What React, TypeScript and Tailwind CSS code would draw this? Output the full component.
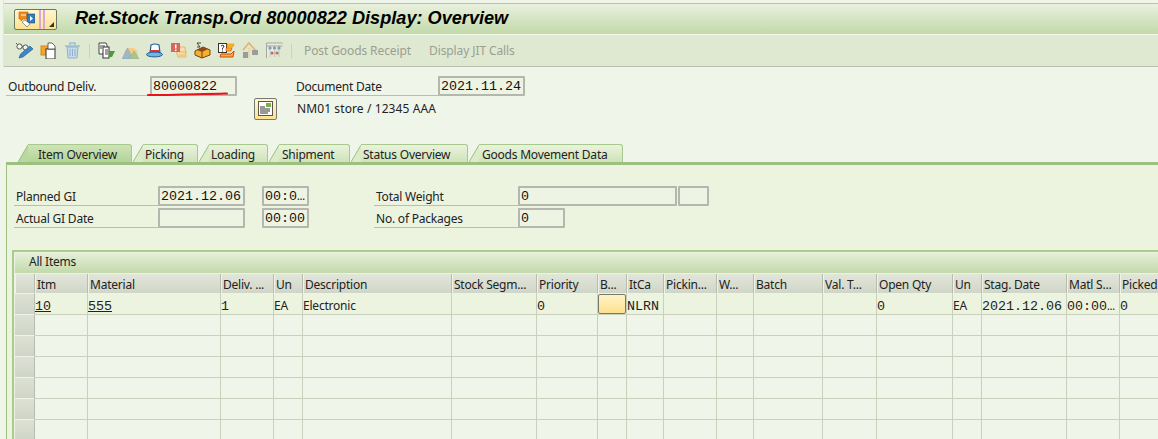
import type { ReactNode } from "react";

const sans = "[font-family:'Noto_Sans','Open_Sans',sans-serif] tracking-[-0.22px]";

const columns = [
  { w: 20, label: "" },
  { w: 53, label: "Itm" },
  { w: 133, label: "Material" },
  { w: 53, label: "Deliv. ..." },
  { w: 29, label: "Un" },
  { w: 149, label: "Description" },
  { w: 85, label: "Stock Segm..." },
  { w: 61, label: "Priority" },
  { w: 29, label: "B..." },
  { w: 37, label: "ItCa" },
  { w: 53, label: "Pickin..." },
  { w: 37, label: "W..." },
  { w: 69, label: "Batch" },
  { w: 54, label: "Val. T..." },
  { w: 76, label: "Open Qty" },
  { w: 29, label: "Un" },
  { w: 85, label: "Stag. Date" },
  { w: 53, label: "Matl S..." },
  { w: 53, label: "Picked" },
];

const tabs = [
  { label: "Item Overview", w: 104, pad: 10, active: true },
  { label: "Picking", w: 55, pad: 2 },
  { label: "Loading", w: 59, pad: 2 },
  { label: "Shipment", w: 71, pad: 3 },
  { label: "Status Overview", w: 107, pad: 2 },
  { label: "Goods Movement Data", w: 144, pad: 3 },
];

function Box({ w, children }: { w: number; children?: ReactNode }) {
  return (
    <div
      style={{ width: w }}
      className="h-[20px] shrink-0 border-2 border-[#b4b7ae] rounded-[1px] bg-[#eef4e4] pl-[1px] text-[#111] leading-[17px] tracking-normal whitespace-nowrap overflow-hidden [font-family:'Liberation_Mono',monospace] text-[13.33px]"
    >
      {children}
    </div>
  );
}

function Label({ w, children }: { w: number; children: ReactNode }) {
  return (
    <div
      style={{ width: w }}
      className="h-[20px] shrink-0 border-b border-[#b9bdb2] pl-[2px] text-[12px] leading-[21px] text-[#222] whitespace-nowrap"
    >
      {children}
    </div>
  );
}

function Tab({ label, w, pad, active }: { label: string; w: number; pad: number; active?: boolean }) {
  const fill = active ? "#b9d89f" : "#dcebc8";
  return (
    <div className="flex h-[18px] shrink-0 items-stretch">
      <svg width="10" height="18" viewBox="0 0 10 18" className="shrink-0">
        <path d="M0 18 L10 1 L10 18 Z" fill={fill} />
        <path d="M0 18 L10 1" stroke="#9cc07f" fill="none" />
      </svg>
      <div
        style={{ width: w, paddingLeft: pad }}
        className={`border-t border-r border-[#a8c98d] rounded-tr-[3px] text-[12px] leading-[19px] text-[#222] whitespace-nowrap ${
          active ? "bg-gradient-to-b from-[#cfe4b8] to-[#b3d497]" : "bg-gradient-to-b from-[#eaf3dd] to-[#cfe3b8]"
        }`}
      >
        {label}
      </div>
    </div>
  );
}

function Ico({ children }: { children: ReactNode }) {
  return (
    <svg width="17" height="17" viewBox="0 0 17 17" className="shrink-0">
      {children}
    </svg>
  );
}

function Toolbar() {
  return (
    <div className="flex items-center h-[32px] pl-[12px] bg-[#dfe8d0] border-b border-[#b9bfae]">
      <div className="flex items-center gap-[7px]">
        <Ico>
          <circle cx="3.5" cy="4.5" r="2.6" fill="#f4f7ee" stroke="#555" />
          <circle cx="9.5" cy="5.5" r="2.6" fill="#f4f7ee" stroke="#555" />
          <path d="M0 1 L1.5 2.5 M6 4.5 L7 5" stroke="#555" />
          <path d="M3 16 L4.5 12 L14 4 L17 7 L7 15 Z" fill="#3d86c6" stroke="#24598f" strokeWidth=".6" />
        </Ico>
        <Ico>
          <rect x="1" y="4" width="9" height="9" fill="#f4a52a" stroke="#d98a12" />
          <rect x="6" y="7" width="9" height="10" fill="#fff" stroke="#333" />
          <path d="M8 1 H12 L15 4 V7 H8 Z" fill="#fff" stroke="#444" strokeWidth=".8" />
        </Ico>
        <Ico>
          <path d="M1 4 H16 M6 3 V1 H11 V3" stroke="#9dbdd6" strokeWidth="1.5" fill="none" />
          <path d="M3 5 H14 L13 16 H4 Z" fill="#c7dae8" stroke="#8fb2cd" />
          <path d="M6 7 V14 M8.5 7 V14 M11 7 V14" stroke="#8fb2cd" />
        </Ico>
      </div>
      <div className="w-[1px] h-[14px] bg-[#c3d9ab] ml-[8px] mr-[8px]" />
      <div className="flex items-center gap-[7px]">
        <Ico>
          <path d="M1 1 H8 L9 3 V12 H1 Z" fill="#fff" stroke="#444" />
          <rect x="5" y="5" width="6" height="11" fill="#fff" stroke="#333" />
          <path d="M2 4 H7 M2 6 H4 M7 8 H10 M7 10 H10 M7 12 H10" stroke="#444" />
          <path d="M11 9 H17 L14 15 H11 Z" fill="#4f9a3c" />
        </Ico>
        <Ico>
          <path d="M2 11 A7.5 8 0 0 1 16 11 L16 14 H2 Z" fill="#f4cd85" />
          <path d="M0 17 L5.5 6 L11 17 Z" fill="#9db8cc" stroke="#84a1b7" strokeWidth=".5" />
          <path d="M7 17 L12 9 L17 17 Z" fill="#a9c392" stroke="#8fac78" strokeWidth=".5" />
        </Ico>
        <Ico>
          <path d="M4 11 L5 3 Q9 1 13 3 L14 11 Z" fill="#fff" stroke="#1f5f9e" strokeWidth="1.2" />
          <rect x="4" y="8" width="10" height="2" fill="#d4392b" />
          <ellipse cx="8.5" cy="12.5" rx="8" ry="2.4" fill="#7bb1de" stroke="#1f5f9e" />
        </Ico>
        <Ico>
          <path d="M5 5 H15 L16 15 H8 Z" fill="#f8dfae" stroke="#e7b568" />
          <path d="M9 10 H17 M9 13 H15" stroke="#e7b568" />
          <rect x="1" y="1" width="9" height="9" fill="#d9655c" />
          <rect x="5" y="2.5" width="1.5" height="4" fill="#fff" />
          <rect x="5" y="7.5" width="1.5" height="1.5" fill="#fff" />
        </Ico>
        <Ico>
          <path d="M3 1 L6 5 H3 M3 1 H7" stroke="#444" fill="none" />
          <path d="M1 9 L9 5 L16 8 L16 13 L8 16 L1 13 Z" fill="#f2b12f" stroke="#7a3f10" />
          <path d="M3 8 L9 5 L14 7 L8 10 Z" fill="#8a4b16" />
          <path d="M8 10 V16" stroke="#7a3f10" />
        </Ico>
        <Ico>
          <rect x="0.5" y="1.5" width="8" height="9" fill="#fff" stroke="#333" />
          <path d="M3 4 Q4.5 2.5 6 4 Q6 5.5 4.5 6 V7.5 M4.5 8.5 V9.5" stroke="#222" fill="none" />
          <path d="M9 2 H16 L15 5 H9 Z" fill="#f6b42c" stroke="#e6900e" strokeWidth=".6" />
          <path d="M3 12 H13 L16 9 L15 15 H2 Z" fill="#f6b42c" stroke="#d6451d" />
          <path d="M8 6 H14 L13 9 H8 Z" fill="#f6b42c" stroke="#d6451d" strokeWidth=".6" />
        </Ico>
        <Ico>
          <path d="M1 8 L7 1 L14 9" fill="none" stroke="#e2b26c" strokeWidth="1.6" />
          <path d="M5 6 L9 6 L9 9" fill="none" stroke="#ecd9b0" strokeWidth="1" />
          <rect x="1" y="10" width="5" height="6" fill="#9c9c9c" />
          <rect x="10" y="8" width="6" height="5" fill="#9c9c9c" />
          <path d="M7 6 V16" stroke="#ecc98f" />
        </Ico>
        <Ico>
          <path d="M0.5 16 V1 H16.5 M0.5 4 H16.5" stroke="#a3a7a3" fill="#e9eee0" />
          <circle cx="4" cy="6" r="1.6" fill="#6f9cc0" />
          <circle cx="8.5" cy="6" r="1.6" fill="#6f9cc0" />
          <circle cx="13" cy="6" r="1.6" fill="#6f9cc0" />
          <circle cx="6" cy="11" r="1.6" fill="#c56a63" />
          <circle cx="11" cy="11" r="1.6" fill="#c56a63" />
          <path d="M4 3 V15 M8.5 3 V15 M13 3 V15" stroke="#a3a7a3" strokeWidth=".5" />
        </Ico>
      </div>
      <div className="w-[1px] h-[14px] bg-[#c3d9ab] ml-[8px] mr-[12px]" />
      <span className="text-[12px] tracking-[-0.1px] text-[#9a9f92] whitespace-nowrap">Post Goods Receipt</span>
      <span className="ml-[18px] text-[12px] tracking-[-0.1px] text-[#9a9f92] whitespace-nowrap">Display JIT Calls</span>
    </div>
  );
}

function Cell({ w, children, first, highlight }: { w: number; children?: ReactNode; first?: boolean; highlight?: boolean }) {
  return (
    <div
      style={{ width: w }}
      className={`h-[21px] shrink-0 border-b border-r border-[#c9d1bd] leading-[23px] whitespace-nowrap overflow-hidden ${
        first ? "bg-gradient-to-b from-[#dde1d5] to-[#cfd5c6] border-b-[#eef2e8] border-r-[#b7bdae]" : highlight ? "bg-[#ecf4df]" : "bg-[#f0f5ea]"
      }`}
    >
      {children}
    </div>
  );
}

const mono = "[font-family:'Liberation_Mono',monospace] text-[13.33px] tracking-normal";

const rowOne: ReactNode[] = [
  null,
  <span className={`${mono} underline`}>10</span>,
  <span className={`${mono} underline`}>555</span>,
  <span className={mono}>1</span>,
  "EA",
  "Electronic",
  null,
  <span className={mono}>0</span>,
  <div className="h-[20px] w-[28px] rounded-[2px] border border-[#77796f] bg-gradient-to-b from-[#fff3c4] to-[#fde08f]" />,
  <span className={mono}>NLRN</span>,
  null,
  null,
  null,
  null,
  <span className={mono}>0</span>,
  "EA",
  <span className={mono}>2021.12.06</span>,
  <span className={mono}>00:00…</span>,
  <span className={mono}>0</span>,
];

export default function App() {
  return (
    <div className={`relative w-[1158px] h-[439px] overflow-hidden bg-[#f0f5ea] ${sans} text-[12px] text-[#222]`}>
      <div className="ml-[3px] pt-[3px] border-l border-[#dfe6d6]">
        {/* title bar */}
        <div className="flex items-center h-[32px] pl-[10px] border-t border-[#b9c4aa] border-b border-b-[#f4f8ee] bg-gradient-to-b from-[#e9f1de] to-[#c2d9a9]">
          <div className="relative flex h-[21px] w-[43px] items-center rounded-[2px] border border-[#6c7a63] bg-gradient-to-b from-[#fff6cf] to-[#fde28f] pl-[3px]">
            <svg width="17" height="17" viewBox="0 0 17 17">
              <path d="M1 1 H10 V8 H5 L3 10 V8 H1 Z" fill="#f08a18" stroke="#c9590a" strokeWidth=".6" />
              <path d="M3 4 H8" stroke="#fff" />
              <rect x="9" y="3" width="8" height="9" fill="#2f7fbf" stroke="#1b4d7c" strokeWidth=".6" />
              <path d="M12 5 L15 7.5 L12 10 Z" fill="#fff" />
              <path d="M4 11 L9 16 L12 13 L7 9 Z" fill="#fff" stroke="#555" strokeWidth=".6" />
            </svg>
            <div className="ml-[4px] h-[19px] w-[2px] bg-[#d8a9d0]" />
            <div className="ml-[2px] h-[19px] w-[2px] bg-[#d8a9d0]" />
            <svg width="5" height="5" viewBox="0 0 5 5" className="absolute right-[2px] bottom-[2px]">
              <path d="M5 0 V5 H0 Z" fill="#333" />
            </svg>
          </div>
          <div className="ml-[18px] -mt-[1px] [font-family:'Liberation_Sans',sans-serif] tracking-normal text-[18.15px] font-bold italic text-black whitespace-nowrap">
            Ret.Stock Transp.Ord 80000822 Display: Overview
          </div>
        </div>
        <Toolbar />
      </div>

      {/* header fields */}
      <div className="flex pt-[9px] pl-[6px]">
        <Label w={144}>Outbound Deliv.</Label>
        <Box w={87}>80000822</Box>
        <div className="w-[57px] shrink-0" />
        <Label w={144}>Document Date</Label>
        <Box w={87}>2021.11.24</Box>
      </div>
      <div className="flex items-center h-[24px] pt-[1px]">
        <button className="ml-[254px] flex h-[22px] w-[23px] items-center justify-center rounded-[2px] border border-[#77796f] bg-gradient-to-b from-[#fff6cf] to-[#fde28f]">
          <svg width="15" height="15" viewBox="0 0 15 15">
            <rect x="0.5" y="0.5" width="14" height="14" fill="#fff" stroke="#555" />
            <rect x="8" y="2" width="5" height="4" fill="#79b04a" />
            <path d="M2 6 H7 M2 8 H12 M2 10 H12 M2 12 H10" stroke="#333" />
          </svg>
        </button>
        <span className="ml-[20px] tracking-[0.1px] whitespace-nowrap">NM01 store / 12345 AAA</span>
      </div>

      {/* tabs */}
      <div className="flex pl-[18px] pt-[24px] gap-[1px]">
        {tabs.map((t) => (
          <Tab key={t.label} label={t.label} w={t.w} pad={t.pad} active={t.active} />
        ))}
      </div>

      {/* tab frame */}
      <div className="ml-[6px] border-l border-t-[3px] border-[#9cc07f] bg-[#ecf4df] pt-[21px] h-[280px]">
        <div className="flex pl-[7px]">
          <Label w={144}>Planned GI</Label>
          <Box w={87}>2021.12.06</Box>
          <div className="w-[17px] shrink-0" />
          <Box w={47}>00:0…</Box>
          <div className="w-[65px] shrink-0" />
          <Label w={144}>Total Weight</Label>
          <Box w={159}>0</Box>
          <div className="w-[1px] shrink-0" />
          <Box w={31} />
        </div>
        <div className="flex pl-[7px] pt-[2px]">
          <Label w={144}>Actual GI Date</Label>
          <Box w={87} />
          <div className="w-[17px] shrink-0" />
          <Box w={47}>00:00</Box>
          <div className="w-[65px] shrink-0" />
          <Label w={144}>No. of Packages</Label>
          <Box w={47}>0</Box>
        </div>

        {/* table panel */}
        <div className="ml-[5px] mt-[22px] border-l-2 border-t-2 border-[#a9cb8e] pt-[1px] pl-[1px] overflow-hidden">
          <div className="h-[20px] w-[1200px] pl-[14px] leading-[17px] bg-gradient-to-b from-[#e6efda] to-[#c3d9ab] text-[#222]">
            All Items
          </div>
          <div className="flex w-[1300px] mt-[1px]">
            {columns.map((c, i) => (
              <div
                key={i}
                style={{ width: c.w }}
                className="h-[20px] shrink-0 border-r border-b border-l border-r-[#b7bdae] border-b-[#eef2e8] border-l-[#eef2e8] pl-[1px] leading-[21px] bg-gradient-to-b from-[#e2e6da] to-[#d0d6c7] whitespace-nowrap overflow-hidden"
              >
                {c.label}
              </div>
            ))}
          </div>
          <div className="flex w-[1300px]">
            {columns.map((c, i) => (
              <Cell key={i} w={c.w} first={i === 0} highlight>
                {rowOne[i]}
              </Cell>
            ))}
          </div>
          {[0, 1, 2, 3, 4, 5].map((r) => (
            <div key={r} className="flex w-[1300px]">
              {columns.map((c, i) => (
                <Cell key={i} w={c.w} first={i === 0} />
              ))}
            </div>
          ))}
        </div>
      </div>

      {/* red pen mark over the delivery number */}
      <svg width="84" height="6" viewBox="0 0 84 6" className="absolute left-[146px] top-[91px]">
        <path d="M2 4 C 25 4.5, 40 3, 58 3 S 78 2.5, 81 2.5" stroke="#e8141c" strokeWidth="2" fill="none" strokeLinecap="round" />
      </svg>
    </div>
  );
}
